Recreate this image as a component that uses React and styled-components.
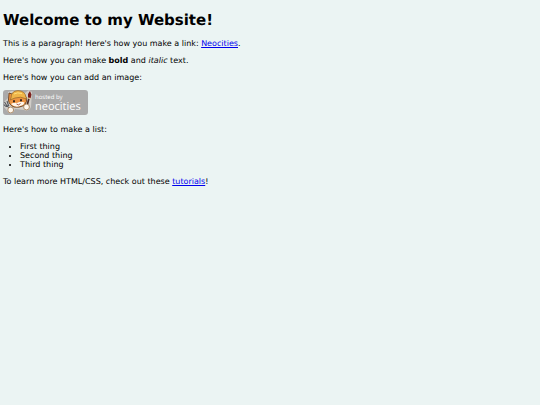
import styled, { createGlobalStyle } from 'styled-components';

export default function App() {
  return (
    <>
      <GlobalStyle />
      <StyledPage>
        <StyledTitle>Welcome to my Website!</StyledTitle>
        <StyledParagraph>
          {'This is a paragraph! Here\'s how you make a link: '}
          <StyledLink href="https://neocities.org">Neocities</StyledLink>
          .
        </StyledParagraph>
        <StyledParagraph>
          Here's how you can make <strong>bold</strong> and <em>italic</em> text.
        </StyledParagraph>
        <StyledParagraph>Here's how you can add an image:</StyledParagraph>
        <NeocitiesBadge />
        <StyledParagraph>Here's how to make a list:</StyledParagraph>
        <StyledList>
          <li>First thing</li>
          <li>Second thing</li>
          <li>Third thing</li>
        </StyledList>
        <StyledParagraph>
          {'To learn more HTML/CSS, check out these '}
          <StyledLink href="https://neocities.org/tutorials">tutorials</StyledLink>
          !
        </StyledParagraph>
      </StyledPage>
    </>
  );
}

function NeocitiesBadge() {
  return (
    <StyledBadge viewBox="0 0 85 25" role="img" aria-label="hosted by neocities">
      <rect x="0" y="0" width="85" height="25" rx="3" fill="#aaaaaa" />
      {/* light rim around the cat */}
      <path d="M1 12 L5 8 L5 2 Q14 -1 22 3 L26 0 L29 2 L28 17 Q26 22 21 20 L12 19 Q9 26 5 22 L1 17 Z" fill="#d0cdc8" />
      {/* fork */}
      <path d="M1.5 12 L4 16 M4 11 L5.5 15.5 M1 14.5 Q3 18 6 15 M4.5 16 L8 21" stroke="#555a5e" strokeWidth="1.1" fill="none" />
      {/* brush */}
      <path d="M23.5 18 L26 8" stroke="#4e2c22" strokeWidth="1.7" />
      <path d="M25 8 L25 4 L27 1 L28.4 4.5 L27.6 8.5 Z" fill="#7d1f1c" />
      <path d="M24.8 8 L27.7 8.6" stroke="#e6cfa0" strokeWidth="1.2" />
      {/* head */}
      <path d="M5.5 10 L6 3 L9 4 Q14 2 19 4 L23 7 Q25 12 21 15.5 Q16 18 11 17 Q6 15 5.5 10 Z" fill="#ee9440" stroke="#66401f" strokeWidth="0.9" />
      <path d="M8 14 Q11 12 14 13 Q18 11 21.5 12.5 Q20.5 15.5 17 16 Q12 18 8 14 Z" fill="#fff6ea" />
      {/* helmet */}
      <path d="M8 8 Q8 1 15 0.6 Q22 1 23 7 L24 9 Q17 6 12 8 L7 10 Z" fill="#f0b548" stroke="#93662b" strokeWidth="0.7" />
      <path d="M11 4 Q14 2 19 3.5" stroke="#ffe07c" strokeWidth="1" fill="none" />
      <ellipse cx="11" cy="11.3" rx="1" ry="1.3" fill="#33231a" />
      <ellipse cx="18" cy="10.3" rx="1" ry="1.3" fill="#33231a" />
      <path d="M13.5 14 Q15.5 16 17.5 13.5" stroke="#8e3526" strokeWidth="0.8" fill="none" />
      {/* paws */}
      <circle cx="7.7" cy="20" r="2.9" fill="#fff8ee" stroke="#a07a52" strokeWidth="0.8" />
      <circle cx="23.5" cy="17" r="2.9" fill="#fff8ee" stroke="#a07a52" strokeWidth="0.8" />
      <BadgeText x="32" y="9" $size={6}>hosted by</BadgeText>
      <BadgeText x="32" y="20" $size={11}>neocities</BadgeText>
    </StyledBadge>
  );
}

const GlobalStyle = createGlobalStyle`
  body {
    margin: 0;
    background-color: #ebf4f3;
    color: #000000;
    font-family: Verdana, "DejaVu Sans", sans-serif;
    font-size: 8px;
    text-rendering: geometricPrecision;
  }
`;
const StyledPage = styled.main`
  padding: 11px 3px;
`;
const StyledTitle = styled.h1`
  margin: 0 0 10px;
  font-size: 15px;
  line-height: 18px;
`;
const StyledParagraph = styled.p`
  margin: 0 0 8px;
  line-height: 9px;
`;
const StyledLink = styled.a`
  color: #0000ee;
`;
const StyledList = styled.ul`
  margin: 0 0 8px;
  padding-left: 17px;
  line-height: 9px;
`;
const StyledBadge = styled.svg`
  display: block;
  width: 85px;
  height: 25px;
  margin-bottom: 10px;
`;
const BadgeText = styled.text`
  fill: #ffffff;
  font-family: "Open Sans", sans-serif;
  font-size: ${({ $size }) => $size}px;
`;
